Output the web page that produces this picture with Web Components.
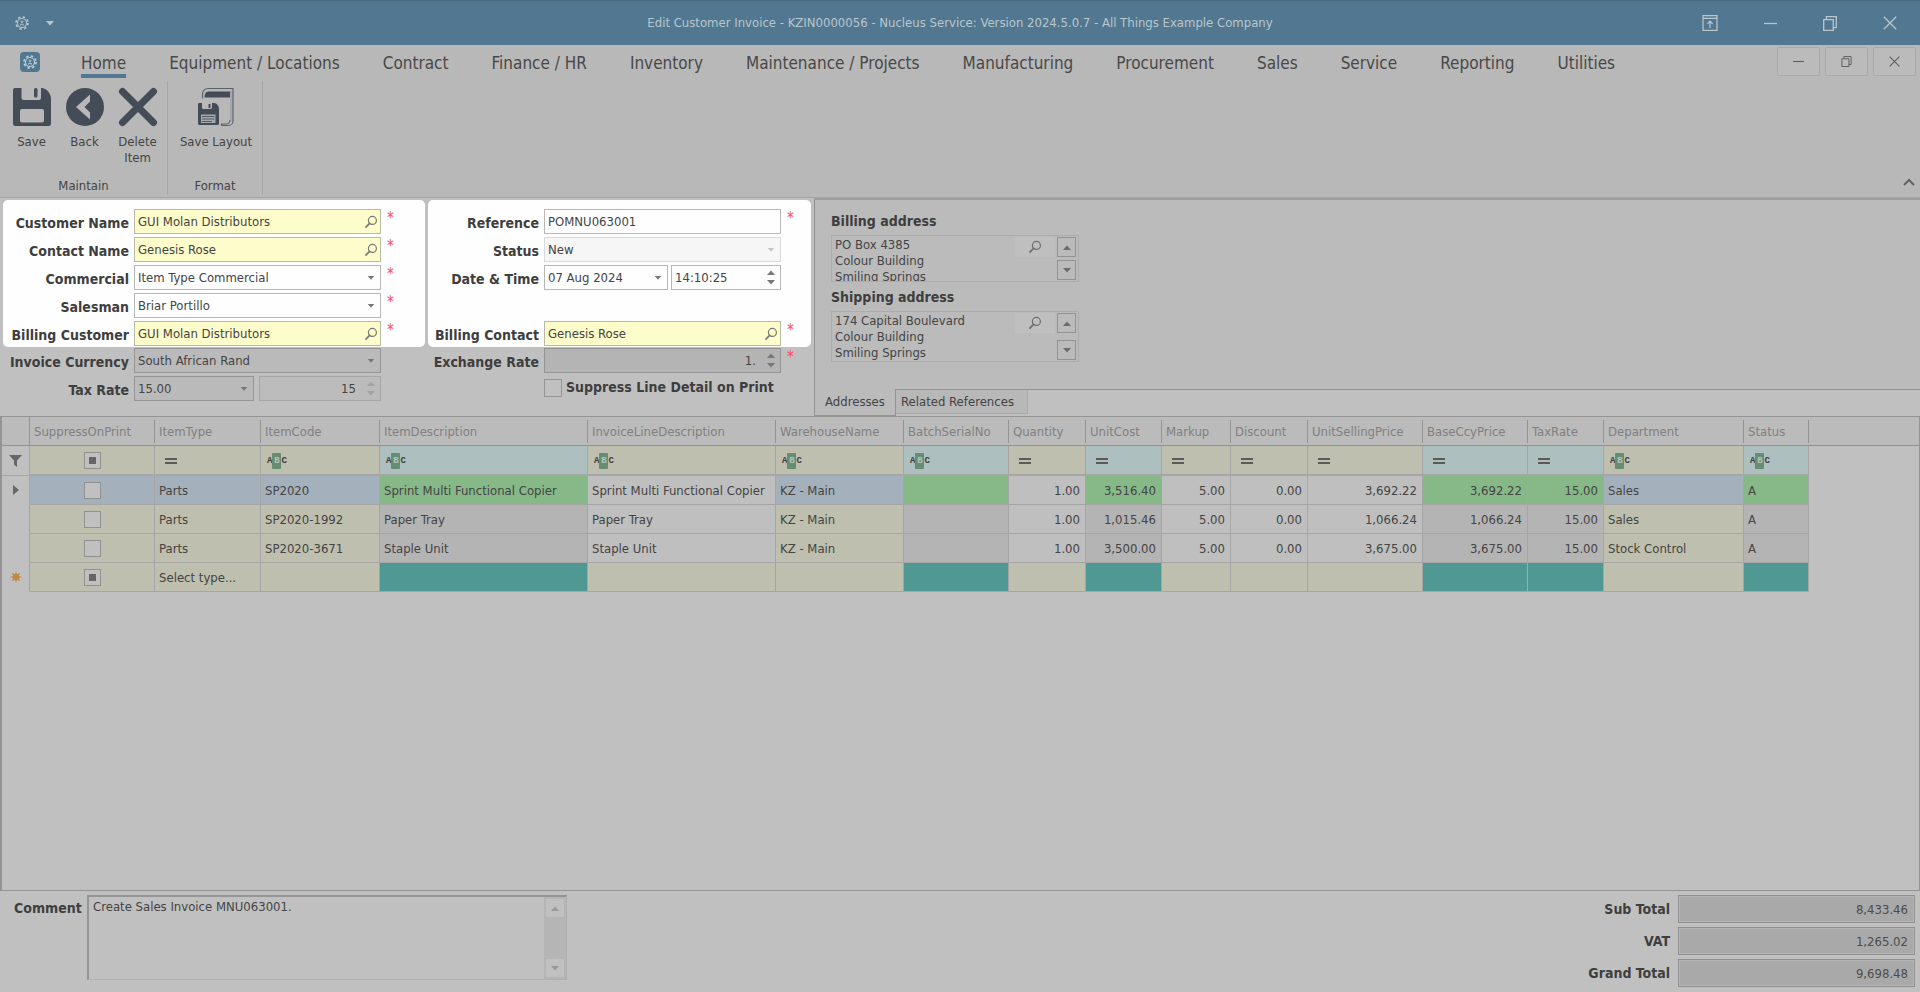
<!DOCTYPE html>
<html lang="en">
<head>
<meta charset="utf-8">
<title>Edit Customer Invoice</title>
<style>
  html { height: 100%; }
  body {
    margin: 0; min-height: 100vh; display: flex; flex-direction: column;
    background: #c0c0c0; color: #444; overflow-x: hidden;
    font: 13px/16px "DejaVu Sans Condensed", "DejaVu Sans", sans-serif;
  }
  invoice-editor { flex: 1; }
</style>
</head>
<body>
<invoice-editor></invoice-editor>
<script>
const ICONS = {
  gear: '<svg viewBox="0 0 16 16" width="14" height="14" fill="none" stroke="currentColor"><circle cx="8" cy="8" r="5.200" stroke-width="1.300"/><circle cx="8" cy="8" r="6.900" stroke-width="1.800" stroke-dasharray="2.700 2.720"/><circle cx="8" cy="6.700" r="1" stroke-width="1"/><path d="M6.500 11V9.500h3V11" stroke-width="1"/></svg>',
  caret: '<svg viewBox="0 0 8 5" width="8" height="5"><path d="M0 0h8L4 4.6z" fill="currentColor"/></svg>',
  up: '<svg viewBox="0 0 8 5" width="8" height="5"><path d="M0 5h8L4 .4z" fill="currentColor"/></svg>',
  search: '<svg viewBox="0 0 14 14" width="14" height="14" fill="none" stroke="currentColor" stroke-width="1.2"><circle cx="8.4" cy="5.4" r="4"/><path d="M5.6 8.4L1.4 12.6" stroke-width="1.7"/></svg>',
  pin: '<svg viewBox="0 0 16 16" width="16" height="16" fill="none" stroke="currentColor" stroke-width="1.2"><path d="M1 .7h14v14.600H1zM1 3.400h14M8 13V6.400M5.400 8.800L8 6.200l2.600 2.600"/></svg>',
  min: '<svg viewBox="0 0 13 13" width="13" height="13" stroke="currentColor" stroke-width="1.3"><path d="M0 6.5h13"/></svg>',
  restore: '<svg viewBox="0 0 14 15" width="14" height="15" fill="none" stroke="currentColor" stroke-width="1.3"><path d="M.7 3.700h9.600v10.600H.7zM3.400 3.500V.7h9.900v11h-2.800"/></svg>',
  close: '<svg viewBox="0 0 14 14" width="14" height="14" stroke="currentColor" stroke-width="1.3"><path d="M.8.8l12.4 12.4M13.2.8L.8 13.2"/></svg>',
  save: '<svg viewBox="0 0 40 40" width="40" height="40" fill="#444d57"><path fill-rule="evenodd" d="M3 1h6.500v9.500a2.500 2.500 0 0 0 2.500 2.500h14.500a2.500 2.500 0 0 0 2.500-2.500V1h1c5 1 9 5 9 11v24.500a2.500 2.500 0 0 1-2.500 2.500h-33A2.500 2.500 0 0 1 1 36.500V3a2 2 0 0 1 2-2zM10 22a2 2 0 0 0-2 2v9.500a2 2 0 0 0 2 2h20a2 2 0 0 0 2-2V24a2 2 0 0 0-2-2z"/><rect x="22" y="1" width="3.500" height="9.500" rx="1.500"/></svg>',
  back: '<svg viewBox="0 0 40 40" width="40" height="40"><circle cx="20" cy="20" r="19" fill="#444d57"/><path d="M25 7.500v7L19.500 20l5.500 5.500v7L11 20z" fill="#b8b8b8"/></svg>',
  del: '<svg viewBox="0 0 40 40" width="40" height="40"><path d="M4.500 4.500l31 31M35.500 4.500l-31 31" stroke="#444d57" stroke-width="7" stroke-linecap="round"/></svg>',
  layout: '<svg viewBox="0 0 40 40" width="40" height="40" fill="none"><path d="M6.500 11.500V7A5.500 5.500 0 0 1 12 1.500h25V34a4.500 4.500 0 0 1-4.500 4.500h-7v-1.500h4.500a4 4 0 0 0 4-4" stroke="#5a626c" stroke-width="1.200"/><path d="M35 3.500V34" stroke="#8b9096" stroke-width=".8"/><path d="M8.500 10.500c0-3 1-6 4-6H34v6z" fill="#444d57"/><path d="M3 16h3v4.500A1.500 1.500 0 0 0 7.500 22h7a1.500 1.500 0 0 0 1.500-1.500V16h2.500c3 .8 4.500 3 4.500 6v14.500a1.500 1.500 0 0 1-1.500 1.500h-18A1.500 1.500 0 0 1 2 36.500V17a1 1 0 0 1 1-1z" fill="#444d57"/><path d="M13.500 17v4" stroke="#444d57" stroke-width="2"/><path d="M5 27.500h14.500V36H5z" fill="#a5a8ac"/><path d="M6 29.500h12.500M6 32h12.500M6 34.500h10" stroke="#545c66"/></svg>',
  chevron: '<svg viewBox="0 0 12 8" width="12" height="8" fill="none" stroke="#636363" stroke-width="2"><path d="M1 7l5-5 5 5"/></svg>',
  funnel: '<svg viewBox="0 0 13 12" width="13" height="12"><path d="M0 0h13L8 5.500V12L5 9.500V5.500z" fill="#666"/></svg>',
  current: '<svg viewBox="0 0 6 10" width="6" height="10"><path d="M0 0l6 5-6 5z" fill="#666"/></svg>',
  fresh: '<svg viewBox="0 0 12 12" width="12" height="12"><path d="M6 0l1 3.200L10.200 1.800 8.800 5 12 6 8.800 7l1.400 3.200L7 8.800 6 12 5 8.800 1.800 10.200 3.200 7 0 6l3.200-1L1.800 1.800 5 3.200z" fill="#c08a45"/></svg>'
};

const BASE = `
  *, *::before, *::after { box-sizing: border-box; }
  button, input, select, textarea { font: inherit; color: inherit; margin: 0; padding: 0; border: 0; background: none; border-radius: 0; outline: 0; }
  svg { display: block; flex: none; }
`;
let uid = 0;

class Base extends HTMLElement {
  connectedCallback() {
    if (this.shadowRoot) return;
    this.attachShadow({ mode: 'open' }).innerHTML = `<style>${BASE}${this.css()}</style>${this.html()}`;
  }
  css() { return ''; }
  html() { return '<slot></slot>'; }
  at(name, fallback = '') { return this.getAttribute(name) ?? fallback; }
}
const define = (name, cls) => customElements.define(name, cls);

define('title-bar', class extends Base {
  css() { return `
    :host { display: grid; grid-template-columns: 1fr auto 1fr; align-items: center; height: 45px; background: #517890; color: #b9c6ce; border-top: 1px solid #4b6c80; }
    .quick { display: flex; align-items: center; gap: 17px; padding-left: 15px; }
    .win { display: flex; justify-content: flex-end; }
    .win button { width: 60px; height: 44px; display: grid; place-items: center; }
    .quick button { display: grid; place-items: center; }`; }
  html() { return `
    <div class="quick"><button aria-label="Application">${ICONS.gear}</button><button aria-label="Customize quick access">${ICONS.caret}</button></div>
    <span><slot></slot></span>
    <div class="win"><button aria-label="Display options">${ICONS.pin}</button><button aria-label="Minimize">${ICONS.min}</button><button aria-label="Restore">${ICONS.restore}</button><button aria-label="Close">${ICONS.close}</button></div>`; }
});

define('ribbon-tabs', class extends Base {
  css() { return `
    :host { display: flex; align-items: flex-start; height: 36px; background: #b8b8b8; padding: 0 4px 0 20px; }
    .app { width: 20px; height: 20px; margin: 7px 41px 0 0; border-radius: 4px; background: #517890; color: #c4d0d7; display: grid; place-items: center; }
    nav { display: flex; gap: 43px; flex: 1; }
    a { font-size: 17px; line-height: 20px; padding: 8px 0 1px; color: #484848; text-decoration: none; white-space: nowrap; border-bottom: 4px solid transparent; }
    a.on { border-bottom-color: #517890; }
    .mdi { display: flex; gap: 5px; padding-top: 2px; }
    .mdi button { width: 43px; height: 29px; display: grid; place-items: center; border: 1px solid #aaa; border-radius: 2px; background: #bbb; color: #5e5e5e; }
    .mdi svg { width: 11px; height: 11px; }`; }
  html() {
    const tabs = this.at('tabs').split('|');
    return `<button class="app" aria-label="Menu">${ICONS.gear}</button>
    <nav>${tabs.map((t, i) => `<a href="#" class="${i ? '' : 'on'}">${t}</a>`).join('')}</nav>
    <div class="mdi"><button aria-label="Minimize document">${ICONS.min}</button><button aria-label="Restore document">${ICONS.restore}</button><button aria-label="Close document">${ICONS.close}</button></div>`; }
});

define('ribbon-button', class extends Base {
  css() { return `
    :host { display: block; width: var(--w, 53px); }
    button { width: 100%; display: flex; flex-direction: column; align-items: center; gap: 7px; text-align: center; }`; }
  html() { return `<button>${ICONS[this.at('icon')]}<span><slot></slot></span></button>`; }
});

define('ribbon-group', class extends Base {
  css() { return `
    :host { display: flex; flex-direction: column; height: 114px; border-right: 1px solid #a6a6a6; }
    .items { flex: 1; display: flex; padding: 6px 3px 0 5px; }
    .name { text-align: center; line-height: 18px; }`; }
  html() { return `<div class="items"><slot></slot></div><div class="name">${this.at('name')}</div>`; }
});

define('ribbon-panel', class extends Base {
  css() { return `
    :host { display: flex; height: 117px; background: #b8b8b8; border-bottom: 1px solid #a5a5a5; }
    button { margin: auto 5px 11px auto; }`; }
  html() { return `<slot></slot><button aria-label="Collapse ribbon">${ICONS.chevron}</button>`; }
});

/* One labelled row of the form: text, lookup, select, spin or checkbox editors. */
define('form-field', class extends Base {
  css() { return `
    :host { display: flex; height: 25px; }
    label.cap { width: var(--cap); flex: none; font-size: 14px; font-weight: bold; color: #3e3e3e; text-align: right; padding: 6px 5px 0 0; white-space: nowrap; }
    .eds { flex: none; width: var(--ed); display: flex; gap: var(--split, 3px); }
    .box { position: relative; display: flex; align-items: center; border: 1px solid var(--line, #b3b3b3); flex: 1; background: var(--fill, transparent); color: #444; }
    .box.fix { flex: none; width: var(--first); }
    .box.lookup { background: #fdfccb; border-color: #b9b9a8; }
    .box.dis { border-color: var(--disline, #d9d9d9); background: var(--disfill, #f6f6f6); }
    input:not([type=checkbox]), select { appearance: none; flex: 1; min-width: 0; width: 100%; height: 100%; padding: 0 3px; }
    .right input { text-align: right; padding-right: 11px; }
    .ico { color: #777; margin-right: 6px; flex: none; display: grid; place-items: center; }
    .box.lookup .ico { margin-right: 2px; }
    .arrow { position: absolute; right: 5px; top: 10px; color: #777; pointer-events: none; }
    .arrow svg { width: 8px; height: 4px; }
    .dis .arrow, .dis .ico { color: var(--dimicon, #c4c4c4); }
    .spin { display: grid; gap: 5px; margin-right: 5px; flex: none; }
    .spin button { display: block; height: 5px; color: #777; }
    .dis .spin button { color: #a3a3a3; }
    .star { padding-left: 6px; line-height: 18px; font-size: 15px; color: #ff4b60; }
    .check { display: flex; align-items: flex-start; gap: 4px; white-space: nowrap; font-size: 14px; font-weight: bold; color: #3e3e3e; padding-top: 3px; }
    .check input { appearance: none; width: 18px; height: 18px; border: 1px solid #959595; }
    svg { display: block; }`; }
  editor(type, value, id, cls, aria) {
    const al = aria ? ` aria-label="${aria}"` : '';
    const dis = cls.includes('dis') ? ' disabled' : '';
    if (type === 'select') return `<div class="box ${cls}"><select id="${id}"${al}${dis} style="opacity:1"><option>${value}</option></select><span class="arrow">${ICONS.caret}</span></div>`;
    if (type === 'spin') return `<div class="box ${cls}"><input id="${id}"${al}${dis} value="${value}"><span class="spin"><button aria-label="Increase">${ICONS.up}</button><button aria-label="Decrease">${ICONS.caret}</button></span></div>`;
    if (type === 'lookup') return `<div class="box lookup ${cls}"><input id="${id}" value="${value}"><button class="ico" aria-label="Find">${ICONS.search}</button></div>`;
    return `<div class="box ${cls}"><input id="${id}" value="${value}"></div>`;
  }
  html() {
    const id = 'f' + (++uid), type = this.at('type', 'text');
    if (type === 'empty') return '';
    if (type === 'check') return `<label class="cap"></label><div class="check"><input type="checkbox" id="${id}"><label for="${id}">${this.at('label')}</label></div>`;
    const two = this.at('type2');
    return `<label class="cap" for="${id}">${this.at('label')}</label><div class="eds">${this.editor(type, this.at('value'), id, (two ? 'fix ' : '') + this.at('mode'))}${two ? this.editor(two, this.at('value2'), id + 'b', this.at('mode2'), this.at('label2')) : ''}</div>${this.hasAttribute('required') ? '<span class="star">*</span>' : ''}`;
  }
});

define('form-column', class extends Base {
  css() { return `
    :host { display: block; }
    .lit { background: #fefefe; border-radius: 5px; padding: 9px 0 1px; display: grid; gap: 3px; height: 147px; }
    .dim { padding-top: 1px; display: grid; gap: 3px; }`; }
  html() { return `<div class="lit"><slot name="lit"></slot></div><div class="dim"><slot></slot></div>`; }
});

define('address-box', class extends Base {
  css() { return `
    :host { display: block; width: 248px; }
    label { display: block; font-size: 14px; font-weight: bold; color: #3e3e3e; padding-bottom: 6px; }
    .box { display: flex; height: var(--h); border: 1px solid #acacac; }
    textarea { flex: 1; min-width: 0; resize: none; overflow: hidden; padding: 1px 3px 0; display: block; height: 100%; }
    .find { width: 40px; height: 20px; margin: 1px 2px 0 0; background: #bfbfbf; color: #6d6d6d; display: grid; place-items: center; }
    .bar { display: flex; flex-direction: column; justify-content: space-between; padding: 1px 2px 1px 0; }
    .bar button { width: 19px; height: 20px; border: 1px solid #929292; color: #6b6b6b; display: grid; place-items: center; }`; }
  html() { return `<label for="a">${this.at('label')}</label><div class="box"><textarea id="a">${this.at('value').replaceAll('|', '\n')}</textarea><button class="find" aria-label="Find address">${ICONS.search}</button><div class="bar"><button aria-label="Up">${ICONS.up}</button><button aria-label="Down">${ICONS.caret}</button></div></div>`; }
});

define('address-panel', class extends Base {
  css() { return `
    :host { display: flex; flex-direction: column; flex: 1; min-width: 0; border-top: 2px solid #9e9e9e; }
    .page { height: 190px; background: #bbb; border-left: 1px solid #939393; padding: 13px 0 0 16px; }
    address-box + address-box { margin-top: 7px; }
    .tabs { display: flex; height: 27px; }
    .tabs button { display: block; }
    .on { width: 82px; background: #bbb; border: 1px solid #939393; border-top: 0; }
    .rest { flex: 1; border-top: 1px solid #939393; display: flex; align-items: flex-start; }
    .rest button { width: 132px; height: 24px; padding-left: 5px; text-align: left; background: #b8b8b8; border: solid #a9a9a9; border-width: 0 1px 1px 0; }`; }
  html() { return `
    <div class="page">
      <address-box label="Billing address" value="PO Box 4385|Colour Building|Smiling Springs" style="--h:47px"></address-box>
      <address-box label="Shipping address" value="174 Capital Boulevard|Colour Building|Smiling Springs" style="--h:51px"></address-box>
    </div>
    <div class="tabs"><button class="on">Addresses</button><div class="rest"><button>Related References</button></div></div>`; }
});

const COLS = [
  ['SuppressOnPrint', 125, 'k', 'chk'], ['ItemType', 106, 'k', 'eq'], ['ItemCode', 119, 'k', 'abc'],
  ['ItemDescription', 208, 'g', 'abc'], ['InvoiceLineDescription', 188, 'w', 'abc'], ['WarehouseName', 128, 'k', 'abc'],
  ['BatchSerialNo', 105, 'g', 'abc'], ['Quantity', 77, 'w', 'eq', 1], ['UnitCost', 76, 'g', 'eq', 1],
  ['Markup', 69, 'w', 'eq', 1], ['Discount', 77, 'w', 'eq', 1], ['UnitSellingPrice', 115, 'w', 'eq', 1],
  ['BaseCcyPrice', 105, 'g', 'eq', 1], ['TaxRate', 76, 'g', 'eq', 1], ['Department', 140, 'k', 'abc'], ['Status', 65, 'g', 'abc']
];
const ROWS = [
  ['', 'Parts', 'SP2020', 'Sprint Multi Functional Copier', 'Sprint Multi Functional Copier', 'KZ - Main', '', '1.00', '3,516.40', '5.00', '0.00', '3,692.22', '3,692.22', '15.00', 'Sales', 'A'],
  ['', 'Parts', 'SP2020-1992', 'Paper Tray', 'Paper Tray', 'KZ - Main', '', '1.00', '1,015.46', '5.00', '0.00', '1,066.24', '1,066.24', '15.00', 'Sales', 'A'],
  ['', 'Parts', 'SP2020-3671', 'Staple Unit', 'Staple Unit', 'KZ - Main', '', '1.00', '3,500.00', '5.00', '0.00', '3,675.00', '3,675.00', '15.00', 'Stock Control', 'A'],
  ['', 'Select type...', '', '', '', '', '', '', '', '', '', '', '', '', '', '']
];

define('filter-glyph', class extends Base {
  css() { return `
    :host { display: flex; align-items: center; height: 14px; padding-left: 2px; color: #3c3c3c; font: bold 9px/14px "Liberation Mono", monospace; }
    b { background: #668d72; color: #b5c4b8; width: 9px; height: 16px; line-height: 16px; text-align: center; border-radius: 1px; }
    i { width: 12px; height: 6px; margin-left: 4px; border: solid #5a5a56; border-width: 2px 0; }`; }
  html() { return this.at('kind') === 'eq' ? '<i></i>' : '<span>A</span><b>B</b><span>C</span>'; }
});

define('invoice-grid', class extends Base {
  css() { return `
    :host { display: block; flex: 1; border: solid #949494; border-width: 1px 1px 1px 2px; min-height: 200px; }
    .head { background: #bbb; border-bottom: 1px solid #919191; height: 29px; margin-bottom: -29px; }
    table { border-collapse: separate; border-spacing: 0; table-layout: fixed; width: 1807px; position: relative; }
    th { height: 29px; font-weight: normal; text-align: left; padding: 1px 0 0 4px; color: #808080; border-bottom: 1px solid #919191; background: linear-gradient(#949494, #949494) right 3px / 1px 23px no-repeat; }
    th { background-position: right 3px; }
    th:first-child { background-size: 1px 29px; background-position: right 0; }
    td { height: 29px; padding: 1px 4px 0; border: solid #a6a6a6; border-width: 0 1px 1px 0; white-space: nowrap; overflow: hidden; }
    td.k { background: #bebfae; } td.w { background: #bfbfbf; } td.g { background: #b4b4b4; }
    .cur td.k { background: #a4b1bc; } .cur td.g { background: #86b888; }
    .new td.w { background: #bebfae; } .new td.g { background: #4f9893; }
    .filter td { border-bottom: 2px solid #a6a6a6; height: 30px; }
    .filter td.k, .filter td.w { background: #bebfae; } .filter td.g { background: #adbfbf; }
    tr td:first-child { padding: 0; border-bottom-color: #c0c0c0; }
    tr.filter td:first-child { border-bottom: 1px solid #a6a6a6; }
    td:first-child svg { margin: 0 auto; }
    td.n { text-align: right; padding-right: 5px; }
    input { appearance: none; display: block; width: 17px; height: 17px; margin: 0 auto; border: 1px solid #919191; background: #c0c0c0; }
    input.mix { background: linear-gradient(#666, #666) center / 7px 7px no-repeat #c0c0c0; }`; }
  html() {
    const marks = [ICONS.current, '', '', ICONS.fresh];
    const chk = (mix, n) => `<input type="checkbox" class="${mix ? 'mix' : ''}" aria-label="Suppress on print ${n}">`;
    return `<div class="head"></div><table>
      <colgroup><col style="width:28px">${COLS.map(c => `<col style="width:${c[1]}px">`).join('')}</colgroup>
      <thead><tr><th></th>${COLS.map(c => `<th>${c[0]}</th>`).join('')}</tr></thead>
      <tbody><tr class="filter"><td>${ICONS.funnel}</td>${COLS.map(c => `<td class="${c[2]}">${c[3] === 'chk' ? chk(1, 'filter') : `<filter-glyph kind="${c[3]}"></filter-glyph>`}</td>`).join('')}</tr>
      ${ROWS.map((r, n) => `<tr class="${n === 0 ? 'cur' : n === 3 ? 'new' : ''}"><td>${marks[n]}</td>${r.map((v, i) => `<td class="${COLS[i][2]}${COLS[i][4] ? ' n' : ''}">${i ? v : chk(n === 3, n + 1)}</td>`).join('')}</tr>`).join('')}</tbody></table>`;
  }
});

define('comment-box', class extends Base {
  css() { return `
    :host { display: flex; padding: 4px 0 0 14px; }
    label { width: 73px; font-size: 14px; font-weight: bold; color: #3e3e3e; padding-top: 5px; }
    .box { display: flex; width: 480px; height: 85px; border: solid #b0b0b0; border-width: 2px 1px 1px 2px; border-top-color: #959595; border-left-color: #959595; }
    textarea { flex: 1; resize: none; padding: 2px 4px; display: block; height: 100%; overflow: hidden; }
    .bar { width: 22px; background: #b5b5b5; display: flex; flex-direction: column; justify-content: space-between; padding: 2px; }
    .bar button { height: 18px; background: #c0c0c0; color: #999; display: grid; place-items: center; }`; }
  html() { return `<label for="c">Comment</label><div class="box"><textarea id="c">Create Sales Invoice MNU063001.</textarea><div class="bar"><button aria-label="Scroll up">${ICONS.up}</button><button aria-label="Scroll down">${ICONS.caret}</button></div></div>`; }
});

define('total-field', class extends Base {
  css() { return `
    :host { display: flex; align-items: center; justify-content: flex-end; gap: 8px; }
    label { font-size: 14px; font-weight: bold; color: #3e3e3e; }
    input { width: 237px; height: 28px; border: 1px solid #909090; outline: 1px solid #b5b5b5; outline-offset: -2px; background: #a9a9a9; text-align: right; padding-right: 6px; color: #4c4c4c; }`; }
  html() { return `<label for="t">${this.at('label')}</label><input id="t" readonly value="${this.at('value')}">`; }
});

define('invoice-editor', class extends Base {
  css() { return `
    :host { display: flex; flex-direction: column; }
    .form { display: flex; height: 218px; }
    form-column { margin-top: 2px; flex: none; --line: #b8b8b8; }
    .a { margin-left: 3px; width: 422px; --cap: 131px; --ed: 247px; --split: 5px; --first: 120px; }
    .b { margin-left: 3px; width: 383px; --cap: 116px; --ed: 237px; --split: 3px; --first: 124px; }
    form-field:not([slot]) { --line: #959595; }
    .grey { --fill: #bababa; --disfill: #bcbcbc; --disline: #a6a6a6; }
    address-panel { margin-left: 3px; }
    .foot { display: flex; justify-content: space-between; height: 101px; }
    .totals { display: grid; gap: 4px; align-content: start; padding: 4px 5px 0 0; }`; }
  html() { return `
    <title-bar>Edit Customer Invoice - KZIN0000056 - Nucleus Service: Version 2024.5.0.7 - All Things Example Company</title-bar>
    <ribbon-tabs tabs="Home|Equipment / Locations|Contract|Finance / HR|Inventory|Maintenance / Projects|Manufacturing|Procurement|Sales|Service|Reporting|Utilities"></ribbon-tabs>
    <ribbon-panel>
      <ribbon-group name="Maintain"><ribbon-button icon="save">Save</ribbon-button><ribbon-button icon="back">Back</ribbon-button><ribbon-button icon="del">Delete<br>Item</ribbon-button></ribbon-group>
      <ribbon-group name="Format"><ribbon-button icon="layout" style="--w:86px">Save Layout</ribbon-button></ribbon-group>
    </ribbon-panel>
    <div class="form">
      <form-column class="a">
        <form-field slot="lit" type="lookup" label="Customer Name" value="GUI Molan Distributors" required></form-field>
        <form-field slot="lit" type="lookup" label="Contact Name" value="Genesis Rose" required></form-field>
        <form-field slot="lit" type="select" label="Commercial" value="Item Type Commercial" required></form-field>
        <form-field slot="lit" type="select" label="Salesman" value="Briar Portillo" required></form-field>
        <form-field slot="lit" type="lookup" label="Billing Customer" value="GUI Molan Distributors" required></form-field>
        <form-field class="grey" type="select" label="Invoice Currency" value="South African Rand"></form-field>
        <form-field class="grey" type="select" label="Tax Rate" value="15.00" type2="spin" value2="15" mode2="dis right" label2="Tax rate percent"></form-field>
      </form-column>
      <form-column class="b">
        <form-field slot="lit" label="Reference" value="POMNU063001" required></form-field>
        <form-field slot="lit" type="select" label="Status" value="New" mode="dis"></form-field>
        <form-field slot="lit" type="select" label="Date &amp;amp; Time" value="07 Aug 2024" type2="spin" value2="14:10:25" label2="Time"></form-field>
        <form-field slot="lit" type="empty"></form-field>
        <form-field slot="lit" type="lookup" label="Billing Contact" value="Genesis Rose" required></form-field>
        <form-field class="grey" type="spin" label="Exchange Rate" value="1." mode="right" required style="--fill:#b4b4b4"></form-field>
        <form-field type="check" label="Suppress Line Detail on Print"></form-field>
      </form-column>
      <address-panel></address-panel>
    </div>
    <invoice-grid></invoice-grid>
    <div class="foot">
      <comment-box></comment-box>
      <div class="totals"><total-field label="Sub Total" value="8,433.46"></total-field><total-field label="VAT" value="1,265.02"></total-field><total-field label="Grand Total" value="9,698.48"></total-field></div>
    </div>`; }
});
</script>
</body>
</html>
